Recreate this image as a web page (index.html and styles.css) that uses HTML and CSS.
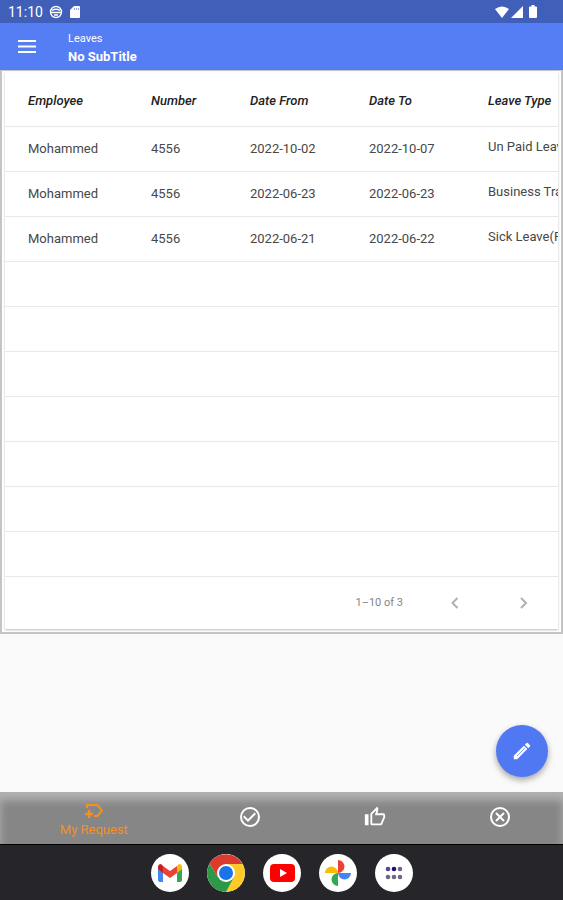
FILE: index.html
```html
<!DOCTYPE html>
<html lang="en">
<head>
    <meta charset="UTF-8">
    <meta name="viewport" content="width=device-width, initial-scale=1.0">
    <title>Leaves</title>
    <link rel="stylesheet" href="styles.css">
</head>

<body>
    <div class="status-bar">
        <span class="clock">11:10</span>
        <svg width="14" height="14" viewBox="0 0 14 14" fill="none" stroke="#fff" stroke-width="1.4">
            <circle cx="7" cy="7" r="5.5"/>
            <path d="M3 5.500q4-2.500 8 0M2 7.500h10M5 10h4"/>
        </svg>
        <svg width="12" height="14" viewBox="0 0 12 14" fill="#fff">
            <path d="M5 1h5q1 0 1 1v10q0 1-1 1H2q-1 0-1-1V5z"/>
            <path d="M5.500 3v2M7.500 3v2M9.500 3v2" stroke="#8da2dc"/>
        </svg>
        <div class="status-right">
            <svg width="14" height="12" viewBox="0 0 14 12" fill="#fff"><path d="M0 3Q7-2 14 3L7 12z"/></svg>
            <svg width="12" height="12" viewBox="0 0 12 12" fill="#fff"><path d="M12 0v12H0z"/></svg>
            <svg class="battery" width="8" height="13" viewBox="0 0 8 13" fill="#fff"><path d="M2.500 0h3v1.500H7q1 0 1 1V12q0 1-1 1H1q-1 0-1-1V2.500q0-1 1-1h1.500z"/></svg>
        </div>
    </div>

    <header class="app-bar">
        <button class="menu-button" aria-label="Menu">
            <svg width="18" height="13" viewBox="0 0 18 13" fill="#fff"><path d="M0 0h18v2H0zM0 5.500h18v2H0zM0 11h18v2H0z"/></svg>
        </button>
        <div class="titles">
            <div class="title">Leaves</div>
            <h1>No SubTitle</h1>
        </div>
    </header>

    <main>
        <div class="frame">
            <div class="card">
                <div class="table-wrap">
                    <table>
                        <colgroup>
                            <col class="col-employee"><col class="col-number"><col class="col-date"><col class="col-date"><col class="col-type">
                        </colgroup>
                        <thead>
                            <tr><th>Employee</th><th>Number</th><th>Date From</th><th>Date To</th><th>Leave Type</th></tr>
                        </thead>
                        <tbody>
                            <tr><td>Mohammed</td><td>4556</td><td>2022-10-02</td><td>2022-10-07</td><td class="type">Un Paid Leave</td></tr>
                            <tr><td>Mohammed</td><td>4556</td><td>2022-06-23</td><td>2022-06-23</td><td class="type">Business Travel</td></tr>
                            <tr><td>Mohammed</td><td>4556</td><td>2022-06-21</td><td>2022-06-22</td><td class="type">Sick Leave(Paid)</td></tr>
                            <tr><td colspan="5"></td></tr>
                            <tr><td colspan="5"></td></tr>
                            <tr><td colspan="5"></td></tr>
                            <tr><td colspan="5"></td></tr>
                            <tr><td colspan="5"></td></tr>
                            <tr><td colspan="5"></td></tr>
                            <tr><td colspan="5"></td></tr>
                        </tbody>
                    </table>
                </div>
                <div class="pagination">
                    <span>1–10 of 3</span>
                    <button aria-label="Previous page"><svg width="24" height="24" viewBox="0 0 24 24"><path d="M14.500 7l-5 5 5 5"/></svg></button>
                    <button aria-label="Next page"><svg width="24" height="24" viewBox="0 0 24 24"><path d="M10 7l5 5-5 5"/></svg></button>
                </div>
            </div>
        </div>
        <button class="fab" aria-label="Edit">
            <svg width="22" height="22" viewBox="0 0 24 24" fill="#fff"><path d="M3 17.250V21h3.750L17.810 9.940l-3.750-3.750zM20.710 7.040c.39-.39.39-1.020 0-1.410l-2.340-2.340a1 1 0 0 0-1.410 0l-1.830 1.830 3.750 3.750z"/><path d="M6.500 17.500L15 9" stroke="#7b96f0" stroke-width="1"/></svg>
        </button>
    </main>

    <nav class="tabs">
        <a href="#" class="active">
            <svg width="20" height="18" viewBox="0 0 20 18" fill="none" stroke="#f5901f" stroke-width="2"><path d="M3 6V3h10.500l4.500 5.500-4.500 5.500H10"/><path d="M1 12h8M5 8v8" stroke-width="2.4"/></svg>
            <span>My Request</span>
        </a>
        <a href="#" aria-label="Approved">
            <svg width="24" height="24" viewBox="0 0 24 24" fill="#fff"><path d="M16.590 7.580L10 14.170l-3.590-3.580L5 12l5 5 8-8zM12 2a10 10 0 1 0 0 20 10 10 0 0 0 0-20zm0 18a8 8 0 1 1 0-16 8 8 0 0 1 0 16z"/></svg>
        </a>
        <a href="#" aria-label="Accept">
            <svg width="24" height="24" viewBox="0 0 26 26" fill="#fff"><path transform="translate(1 1)" d="M9 21h9c.83 0 1.540-.5 1.840-1.220l3.020-7.050c.09-.23.14-.47.14-.73v-2c0-1.100-.9-2-2-2h-6.310l.95-4.570.03-.32c0-.41-.17-.79-.44-1.060L14.170 1 7.580 7.590C7.220 7.950 7 8.450 7 9v10c0 1.100.9 2 2 2zM9 9l4.340-4.340L12 10h9v2l-3 7H9zM1 9h4v12H1z"/></svg>
        </a>
        <a href="#" aria-label="Rejected">
            <svg width="24" height="24" viewBox="0 0 24 24" fill="none" stroke="#fff" stroke-width="2"><circle cx="12" cy="12" r="9"/><path d="M8 8l8 8M16 8l-8 8"/></svg>
        </a>
    </nav>

    <div class="dock">
        <button aria-label="Gmail">
            <svg width="38" height="38" viewBox="0 0 38 38">
                <path fill="#4285f4" d="M7 13v13q0 2 2 2h3V16z"/>
                <path fill="#34a853" d="M26 16v12h3q2 0 2-2V13z"/>
                <path fill="#fbbc04" d="M26 12v7l5-4v-2q0-3-3-3z"/>
                <path fill="#c5221f" d="M7 13v2l5 4v-7l-2-2q-3 0-3 3z"/>
                <path fill="#ea4335" d="M12 19v-7l7 5 7-5v7l-7 5z"/>
            </svg>
        </button>
        <button aria-label="Chrome">
            <svg width="38" height="38" viewBox="0 0 38 38">
                <path fill="#ffc928" d="M19 10h16.700A19 19 0 0 1 19 38l8-15z"/>
                <path fill="#2d9848" d="M2.500 9.500A19 19 0 0 0 19 38l7.800-14.500L11 23z"/>
                <path fill="#db3a2d" d="M2.500 9.500l8.700 14L19 10h16.500A19 19 0 0 0 2.500 9.500z"/>
                <circle cx="19" cy="19" r="9" fill="#fff"/>
                <circle cx="19" cy="19" r="7" fill="#1a73e8"/>
            </svg>
        </button>
        <button aria-label="YouTube">
            <svg width="38" height="38" viewBox="0 0 38 38"><rect x="7" y="10" width="25" height="18" rx="4" fill="#f00"/><path fill="#fff" d="M17 15l7 4-7 4z"/></svg>
        </button>
        <button aria-label="Photos">
            <svg width="38" height="38" viewBox="0 0 38 38">
                <path fill="#ea4335" d="M19 6a6.500 6.500 0 0 1 0 13z"/>
                <path fill="#4285f4" d="M32 19a6.500 6.500 0 0 1-13 0z"/>
                <path fill="#34a853" d="M19 32a6.500 6.500 0 0 1 0-13z"/>
                <path fill="#fbbc04" d="M6 19a6.500 6.500 0 0 1 13 0z"/>
            </svg>
        </button>
        <button aria-label="All apps">
            <svg width="38" height="38" viewBox="0 0 38 38" fill="#6d6785">
                <circle cx="13" cy="15" r="2.300" fill="#55459a"/><circle cx="19" cy="15" r="2.300" fill="#1c0f80"/><circle cx="25" cy="15" r="2.300" fill="#806080"/>
                <circle cx="13" cy="23" r="2.300"/><circle cx="19" cy="23" r="2.300"/><circle cx="25" cy="23" r="2.300"/>
            </svg>
        </button>
    </div>
</body>
</html>
```
FILE: styles.css
```css
* {
    box-sizing: border-box;
}

body {
    margin: 0;
    font-family: Roboto, "Liberation Sans", sans-serif;
    font-size: 13px;
    background: #fafafa;
    display: flex;
    flex-direction: column;
    min-height: 100vh;
}

button {
    border: 0;
    padding: 0;
    background: none;
    cursor: pointer;
}

svg {
    display: block;
}

.status-bar {
    display: flex;
    align-items: center;
    gap: 6px;
    height: 23px;
    padding: 0 26px 0 8px;
    background: #3f5fb8;
    color: #fff;
}

.clock {
    font-size: 14px;
    line-height: 22px;
}

.status-right {
    display: flex;
    align-items: center;
    gap: 2px;
    margin-left: auto;
}

.battery {
    margin-left: 4px;
}

.app-bar {
    display: flex;
    align-items: center;
    height: 47px;
    padding-left: 18px;
    gap: 32px;
    background: #557df4;
    color: #fff;
}

.titles {
    padding-top: 4px;
}

.title {
    font-size: 11px;
    line-height: 16px;
}

h1 {
    margin: 0;
    font-size: 13px;
    line-height: 20px;
}

main {
    position: relative;
    flex: 1;
}

.frame {
    padding: 1px 3px 3px;
    border: solid #c4c4c4;
    border-width: 1px 2px 2px;
    background: #fff;
}

.card {
    background: #fff;
    box-shadow: 0 1px 2px #bbb;
}

.table-wrap {
    overflow: hidden;
}

table {
    width: 620px;
    table-layout: fixed;
    border-collapse: collapse;
}

.col-employee {
    width: 123px;
}

.col-number {
    width: 99px;
}

.col-date {
    width: 119px;
}

th,
td {
    height: 45px;
    padding: 0 0 0 23px;
    border-bottom: 1px solid #e8e8e8;
    text-align: left;
    white-space: nowrap;
    color: #484848;
}

th {
    height: 54px;
    padding-top: 4px;
    font-weight: 500;
    font-style: italic;
    color: #222;
}

.type {
    padding-bottom: 4px;
}

.pagination {
    display: flex;
    align-items: center;
    justify-content: flex-end;
    gap: 44px;
    height: 52px;
    padding-right: 23px;
    font-size: 11px;
    color: #858585;
}

.pagination span {
    margin-right: -4px;
}

.pagination svg {
    fill: none;
    stroke: #b0b0b0;
    stroke-width: 2;
}

.fab {
    position: absolute;
    right: 15px;
    bottom: 15px;
    display: flex;
    align-items: center;
    justify-content: center;
    width: 52px;
    height: 52px;
    border-radius: 50%;
    background: #5078f2;
    box-shadow: 0 3px 6px rgba(0, 0, 0, 0.35);
}

.tabs {
    display: flex;
    height: 52px;
    background: #868686;
    box-shadow: inset 0 8px 8px #b2b2b2;
}

.tabs a {
    flex: 2;
    display: flex;
    flex-direction: column;
    align-items: center;
    padding-top: 13px;
    text-decoration: none;
}

.tabs .active {
    flex: 3;
    padding-top: 10px;
    color: #f5901f;
}

.tabs span {
    line-height: 19px;
}

.dock {
    display: flex;
    align-items: center;
    justify-content: center;
    gap: 18px;
    height: 56px;
    border-top: 1px solid #000;
    background: #25252a;
}

.dock button {
    width: 38px;
    height: 38px;
    border-radius: 50%;
    background: #fff;
    overflow: hidden;
}
```
